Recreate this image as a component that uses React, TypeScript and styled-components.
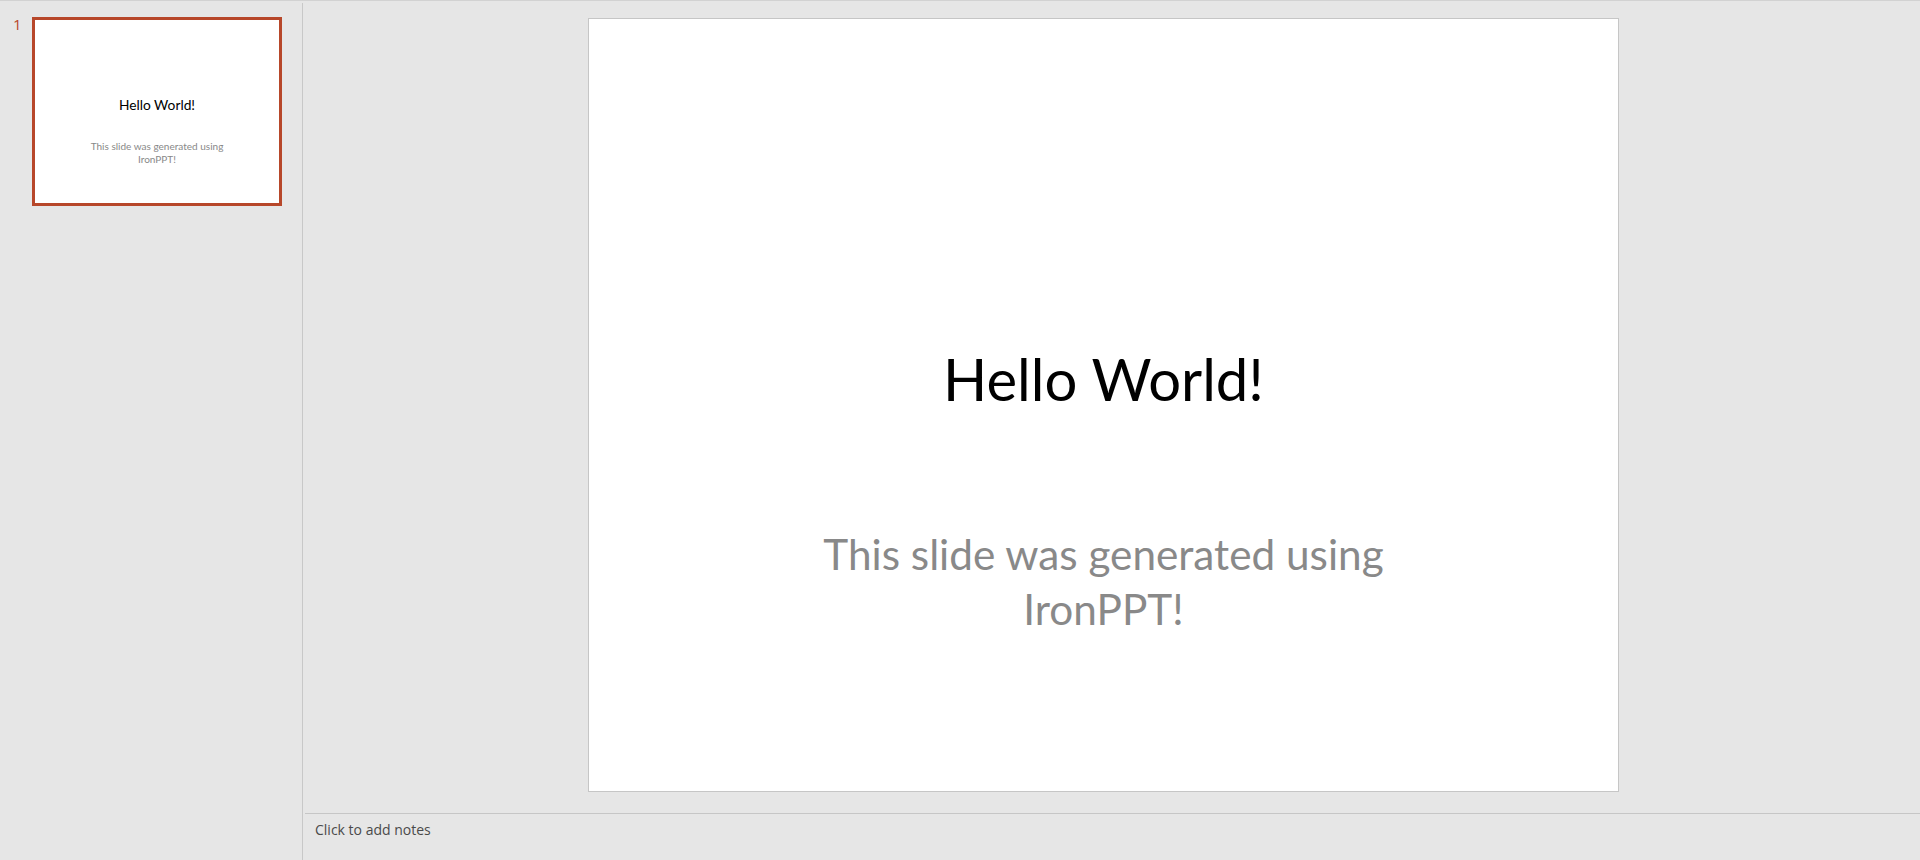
import styled, { createGlobalStyle } from 'styled-components';

const BASE_W = 1029;
const BASE_H = 772;

const GlobalStyle = createGlobalStyle`
  html, body, #root {
    margin: 0;
    padding: 0;
    height: 860px;
    background: #e6e6e6;
    overflow: hidden;
  }
`;

const Shell = styled.div`
  height: 860px;
  display: grid;
  grid-template-columns: 303px 1fr;
  border-top: 1px solid #d2d2d2;
  box-sizing: border-box;
  background: #e6e6e6;
  overflow: hidden;
`;

const ThumbPane = styled.aside`
  border-right: 1px solid #c8c8c8;
  padding: 14px 0 0 12px;
  margin-top: 2px;
  box-sizing: border-box;
`;

const ThumbRow = styled.div`
  display: flex;
  align-items: flex-start;
`;

const SlideNumber = styled.div`
  width: 20px;
  color: #b7472a;
  font-family: 'Open Sans', sans-serif;
  font-size: 15px;
  line-height: 18px;
  margin-top: -2px;
  padding-left: 1px;
  box-sizing: border-box;
`;

const ThumbFrame = styled.div`
  border: 3px solid #b7472a;
  background: #fff;
  display: flex;
`;

const EditPane = styled.main`
  display: flex;
  flex-direction: column;
  min-width: 0;
`;

const Stage = styled.div`
  flex: 1;
  display: flex;
  justify-content: center;
  align-items: flex-start;
  padding: 17px 16px 0 0;
`;

const MainFrame = styled.div`
  border: 1px solid #c6c6c6;
  background: #fff;
  display: flex;
`;

const Slide = styled.div<{ $s: number }>`
  width: ${(p) => BASE_W * p.$s}px;
  height: ${(p) => BASE_H * p.$s}px;
  background: #fff;
  display: flex;
  flex-direction: column;
  align-items: center;
  padding-top: ${(p) => 325 * p.$s}px;
  box-sizing: border-box;
  font-family: Lato, 'Open Sans', sans-serif;
  overflow: hidden;
`;

const Title = styled.div<{ $s: number }>`
  font-size: ${(p) => 58 * p.$s}px;
  line-height: 1.2;
  color: #000;
  white-space: nowrap;
`;

const Subtitle = styled.div<{ $s: number }>`
  margin-top: ${(p) => 112 * p.$s}px;
  width: ${(p) => 720 * p.$s}px;
  font-size: ${(p) => 42.3 * p.$s}px;
  line-height: ${(p) => 55 * p.$s}px;
  color: #898989;
  text-align: center;
`;

const NotesBar = styled.div`
  height: 47px;
  margin-left: 2px;
  border-top: 1px solid #c6c6c6;
  padding: 6px 0 0 10px;
  box-sizing: border-box;
  color: #4a4a4a;
  font-family: 'Open Sans', sans-serif;
  font-size: 14px;
`;

function SlideView({ s }: { s: number }) {
  return (
    <Slide $s={s}>
      <Title $s={s}>Hello World!</Title>
      <Subtitle $s={s}>This slide was generated using IronPPT!</Subtitle>
    </Slide>
  );
}

export default function App() {
  return (
    <>
      <GlobalStyle />
      <Shell>
        <ThumbPane>
          <ThumbRow>
            <SlideNumber>1</SlideNumber>
            <ThumbFrame>
              <SlideView s={244 / BASE_W} />
            </ThumbFrame>
          </ThumbRow>
        </ThumbPane>
        <EditPane>
          <Stage>
            <MainFrame>
              <SlideView s={1} />
            </MainFrame>
          </Stage>
          <NotesBar>Click to add notes</NotesBar>
        </EditPane>
      </Shell>
    </>
  );
}
